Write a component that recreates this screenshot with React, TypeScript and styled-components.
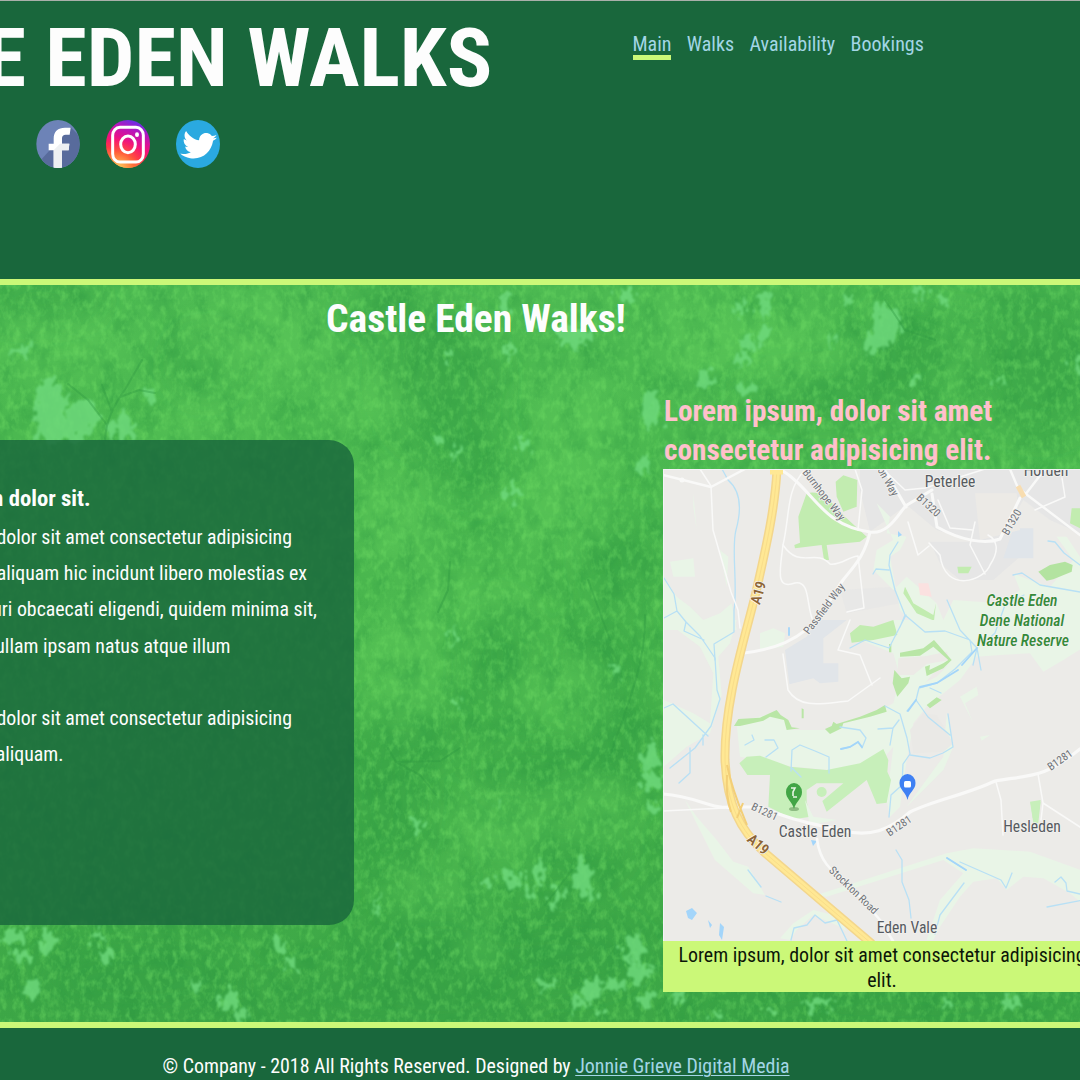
import React from 'react';
import styled, { createGlobalStyle } from 'styled-components';
import { FaTwitter } from 'react-icons/fa';

const color = {
  forest: '#19673c',
  lime: '#cbf878',
  sky: '#a3d6e6',
  pink: '#ffc0cb',
};

const GlobalStyle = createGlobalStyle`
  html, body { margin: 0; padding: 0; background: ${color.forest}; }
  *, *::before, *::after { box-sizing: border-box; }
  body { font-family: Roboto, "Liberation Sans", sans-serif; font-stretch: 75%; }
`;

const Page = styled.div`
  width: 1080px;
  height: 1080px;
  overflow: hidden;
  display: flex;
  flex-direction: column;
  color: #fdfdfd;
`;

const Header = styled.header`
  height: 285px;
  flex: none;
  display: flex;
  background: ${color.forest};
  border-top: 1px solid #a9b0aa;
  border-bottom: 6px solid ${color.lime};
`;

const Brand = styled.div`
  width: 632.5px;
  flex: none;
  padding-top: 16px;
`;

const SiteTitle = styled.h1`
  margin: 0;
  width: 492px;
  display: flex;
  justify-content: flex-end;
  white-space: nowrap;
  font-size: 82px;
  line-height: 82px;
  font-weight: 700;
`;

const TitleText = styled.span`
  transform: scaleX(1.031);
  transform-origin: right;
`;

const Socials = styled.div`
  display: flex;
  gap: 26px;
  padding: 21px 0 0 36px;
`;

const SocialIcon = styled.svg`
  display: block;
  width: 44px;
  height: 48px;
`;

const Nav = styled.nav`
  display: flex;
  align-items: flex-start;
  gap: 15.4px;
  padding-top: 32px;
`;

const NavLink = styled.a<{ $active?: boolean }>`
  color: ${color.sky};
  font-size: 20px;
  line-height: 22px;
  text-decoration: none;
  border-bottom: 5px solid ${(p) => (p.$active ? color.lime : 'transparent')};
`;

const Main = styled.main`
  position: relative;
  flex: none;
  height: 743px;
  background: #48b54d;
  border-bottom: 6px solid ${color.lime};
`;

const Foliage = styled.svg`
  position: absolute;
  inset: 0;
  width: 1080px;
  height: 737px;
`;

const Content = styled.div`
  position: relative;
`;

const PageHeading = styled.h2`
  margin: 0;
  width: 952px;
  padding-top: 11px;
  text-align: center;
  font-size: 39.5px;
  line-height: 46px;
  font-weight: 700;
`;

const Columns = styled.div`
  display: flex;
  align-items: flex-start;
  justify-content: space-between;
  width: 1101px;
  padding-top: 50px;
`;

const Panel = styled.section`
  width: 354px;
  height: 485px;
  margin-top: 48px;
  padding-top: 39px;
  background: rgba(25, 103, 60, 0.83);
  border-radius: 0 25px 25px 0;
`;

const PanelHeading = styled.h3`
  margin: 0 0 2px;
  width: 90.5px;
  display: flex;
  justify-content: flex-end;
  white-space: nowrap;
  font-size: 22.7px;
  line-height: 39px;
  font-weight: 700;
`;

const Paragraph = styled.p`
  margin: 0 0 36.4px;
`;

const Line = styled.span<{ $end: number }>`
  display: flex;
  justify-content: flex-end;
  width: ${(p) => p.$end}px;
  white-space: nowrap;
  font-size: 19.85px;
  line-height: 36.2px;
`;

const Aside = styled.aside`
  width: 438px;
  flex: none;
`;

const AsideHeading = styled.h3`
  margin: 0;
  padding-left: 1px;
  color: ${color.pink};
  font-size: 29.3px;
  line-height: 38.5px;
  font-weight: 700;
`;

const Figure = styled.figure`
  margin: 0;
  background: ${color.lime};
`;

const MapArt = styled.svg`
  display: block;
  width: 438px;
  height: 472px;
`;

const Caption = styled.figcaption`
  height: 51px;
  padding-top: 1.5px;
  color: #0c1608;
  text-align: center;
  font-size: 19.9px;
  line-height: 25.2px;
`;

const Footer = styled.footer`
  flex: none;
  width: 952px;
  padding-top: 27px;
  text-align: center;
  font-size: 19.9px;
  line-height: 24px;
`;

const CreditLink = styled.a`
  color: ${color.sky};
  text-decoration: underline;
  text-decoration-thickness: 1px;
  text-underline-offset: 2px;
`;

const MapText = styled.text`
  font-family: Roboto, "Liberation Sans", sans-serif;
  text-anchor: middle;
  stroke: #f3f2ef;
  stroke-width: 1.6px;
  stroke-linejoin: round;
  paint-order: stroke;
`;

function FacebookIcon() {
  return (
    <SocialIcon viewBox="0 0 132 144" preserveAspectRatio="none">
      <defs>
        <clipPath id="fb"><ellipse cx="66" cy="72" rx="65" ry="72" /></clipPath>
      </defs>
      <g clipPath="url(#fb)">
        <rect width="132" height="144" fill="#6d83b7" />
        <path d="M104 22 132 50V144H28L18 116Z" fill="#586b9c" />
        <path d="M53 144V91H38V71H53V56C53 34 66 23 87 23H104L101 44H89C82 44 78 48 78 55V71H100L98 91H78V144Z" fill="#fff" />
        <path d="M53 91 72 71H100L98 91H78V144H53Z" fill="#eef0f2" />
      </g>
    </SocialIcon>
  );
}

function InstagramIcon() {
  return (
    <SocialIcon viewBox="0 0 132 144" preserveAspectRatio="none">
      <defs>
        <linearGradient id="igBase" x1="0.7" y1="0" x2="0.35" y2="1">
          <stop offset="0" stopColor="#5b35ee" />
          <stop offset="0.22" stopColor="#b516bd" />
          <stop offset="0.5" stopColor="#f2117e" />
          <stop offset="0.72" stopColor="#ff2a48" />
          <stop offset="0.9" stopColor="#ff9443" />
          <stop offset="1" stopColor="#ffd067" />
        </linearGradient>
        <radialGradient id="igWarm" cx="0.3" cy="1" r="0.65">
          <stop offset="0" stopColor="#ffc95c" />
          <stop offset="0.5" stopColor="#ff6b36" stopOpacity="0.8" />
          <stop offset="1" stopColor="#ff3150" stopOpacity="0" />
        </radialGradient>
      </defs>
      <ellipse cx="66" cy="72" rx="66" ry="72" fill="url(#igBase)" />
      <ellipse cx="66" cy="72" rx="66" ry="72" fill="url(#igWarm)" />
      <g fill="none" stroke="#fff">
        <rect x="20" y="22" width="92" height="104" rx="22" ry="24" strokeWidth="9" />
        <ellipse cx="66" cy="73" rx="22" ry="25" strokeWidth="9" />
      </g>
      <ellipse cx="93" cy="44" rx="6" ry="7" fill="#fff" />
    </SocialIcon>
  );
}

function TwitterIcon() {
  return (
    <SocialIcon viewBox="0 0 44 48" preserveAspectRatio="none">
      <ellipse cx="22" cy="24" rx="22" ry="24" fill="#2aa9e0" />
      <g transform="rotate(9 22 26)">
        <FaTwitter x={5.5} y={8.5} size={34} color="#fff" />
      </g>
    </SocialIcon>
  );
}

type Blob = [number, number, number, number];

const clearings: Blob[] = [
  [50, 412, 15, 34], [82, 418, 16, 18], [122, 428, 12, 14], [150, 397, 5, 8], [66, 428, 18, 14], [20, 350, 12, 4],
  [470, 312, 3, 10], [505, 304, 5, 13], [448, 360, 4, 6], [573, 335, 20, 12], [626, 296, 9, 8], [510, 352, 3, 9],
  [652, 410, 9, 20], [643, 465, 6, 10], [525, 445, 7, 6], [455, 455, 3, 10], [512, 490, 6, 11], [440, 440, 4, 4],
  [740, 308, 5, 8], [764, 306, 6, 13], [745, 342, 8, 9], [763, 336, 4, 8], [742, 360, 6, 7], [705, 378, 7, 8],
  [748, 388, 10, 7], [849, 299, 4, 5], [886, 325, 13, 22], [872, 344, 7, 11], [918, 292, 6, 8], [942, 299, 4, 6],
  [917, 380, 7, 5], [831, 341, 3, 5], [1077, 362, 5, 8], [1000, 382, 3, 5],
  [452, 637, 3, 9], [616, 669, 4, 8], [459, 703, 3, 5], [650, 758, 8, 14], [652, 782, 12, 9], [654, 808, 7, 7],
  [418, 826, 6, 6], [501, 803, 3, 6], [513, 880, 9, 9], [538, 874, 7, 12], [488, 882, 7, 4], [582, 876, 8, 18],
  [557, 897, 5, 12], [592, 895, 4, 8], [530, 892, 4, 8], [379, 904, 2, 9], [400, 954, 3, 8], [547, 984, 9, 4],
  [633, 948, 8, 14], [640, 972, 12, 10], [592, 990, 10, 12], [613, 985, 9, 7], [580, 1005, 7, 5], [645, 1000, 8, 7],
  [12, 936, 12, 7], [48, 942, 8, 11], [22, 958, 10, 6], [100, 938, 6, 6], [108, 955, 7, 7], [230, 1000, 9, 11],
  [242, 1014, 7, 7], [280, 946, 7, 6], [290, 965, 4, 4], [195, 985, 5, 6], [30, 990, 8, 7], [605, 1012, 6, 4],
  [820, 1004, 17, 6], [715, 1013, 6, 5], [680, 998, 6, 4], [1010, 1003, 9, 5], [770, 1010, 5, 4], [945, 1006, 6, 4],
];

const shades: Blob[] = [
  [440, 380, 55, 70], [470, 460, 36, 40], [40, 300, 60, 20], [390, 305, 40, 25], [920, 350, 60, 45], [1040, 360, 60, 75],
  [420, 730, 35, 30], [600, 655, 40, 30], [620, 740, 30, 70], [540, 770, 60, 25], [385, 790, 35, 90], [560, 850, 65, 25],
  [440, 970, 90, 70], [560, 950, 80, 35], [380, 1000, 110, 30], [140, 980, 100, 40], [620, 560, 30, 50], [900, 1010, 220, 18],
  [205, 365, 30, 30], [500, 660, 30, 60], [830, 395, 90, 20],
];

const lights: Blob[] = [
  [60, 345, 70, 30], [260, 340, 70, 45], [370, 400, 50, 30], [400, 520, 45, 50], [560, 500, 60, 50], [580, 420, 50, 40],
  [400, 670, 50, 60], [560, 690, 50, 35], [500, 830, 55, 40], [600, 810, 50, 30], [430, 890, 40, 25], [700, 330, 40, 50],
  [780, 350, 60, 35], [200, 420, 60, 20], [480, 600, 70, 25], [960, 355, 20, 35], [480, 940, 15, 35],
];

const blobs = (list: Blob[]) =>
  list.map(([x, y, rx, ry], i) => <ellipse key={i} cx={x} cy={y} rx={rx} ry={ry} />);

function FoliageBackdrop() {
  return (
    <Foliage viewBox="0 285 1080 737" aria-hidden="true">
      <defs>
        <linearGradient id="depth" x1="0" y1="0" x2="0" y2="1">
          <stop offset="0" stopColor="#4dba52" />
          <stop offset="0.5" stopColor="#48b54d" />
          <stop offset="1" stopColor="#3ca646" />
        </linearGradient>
        <filter id="leaves" x="0" y="0" width="100%" height="100%" colorInterpolationFilters="sRGB">
          <feTurbulence type="fractalNoise" baseFrequency="0.15 0.1" numOctaves="3" seed="8" />
          <feColorMatrix values="0 0 0 0 0.45  0 0 0 0 0.88  0 0 0 0 0.4  2.6 0 0 0 -1.15" />
          <feGaussianBlur stdDeviation="0.5" />
        </filter>
        <filter id="gaps" x="0" y="0" width="100%" height="100%" colorInterpolationFilters="sRGB">
          <feTurbulence type="fractalNoise" baseFrequency="0.05 0.035" numOctaves="5" seed="31" />
          <feColorMatrix values="0 0 0 0 0.16  0 0 0 0 0.58  0 0 0 0 0.25  0 2.2 0 0 -0.95" />
        </filter>
        <filter id="ragged" x="-5%" y="-5%" width="110%" height="110%" colorInterpolationFilters="sRGB">
          <feTurbulence type="fractalNoise" baseFrequency="0.14 0.09" numOctaves="2" seed="4" result="n" />
          <feDisplacementMap in="SourceGraphic" in2="n" scale="27" xChannelSelector="R" yChannelSelector="G" />
          <feGaussianBlur stdDeviation="0.9" />
        </filter>
        <filter id="soft" x="-10%" y="-10%" width="120%" height="120%">
          <feGaussianBlur stdDeviation="16" />
        </filter>
      </defs>
      <rect y="285" width="1080" height="737" fill="url(#depth)" />
      <g fill="#36a044" opacity="0.6" filter="url(#soft)">{blobs(shades)}</g>
      <g fill="#62cd5b" opacity="0.45" filter="url(#soft)">{blobs(lights)}</g>
      <rect y="285" width="1080" height="737" filter="url(#gaps)" opacity="0.4" />
      <rect y="285" width="1080" height="737" filter="url(#leaves)" opacity="0.42" />
      <g fill="#6fda7d" opacity="0.82" filter="url(#ragged)">{blobs(clearings)}</g>
      <g fill="none" stroke="#2f9841" strokeWidth="2" opacity="0.38" strokeLinecap="round">
        <path d="M105 440C106 420 114 405 126 388L142 360M107 425 88 400 68 384M112 412 102 385M120 397 139 390 155 393" />
        <path d="M388 748 396 762 440 761 460 748M398 763 420 775 436 795" />
        <path d="M645 615C646 660 630 700 610 755M450 562 448 590 438 612M588 580 610 640M572 870 545 905" />
        <path d="M885 300 905 330 935 340" />
      </g>
    </Foliage>
  );
}

/* The groups scaled by a third use a grid three times finer than the map's own. */
function AreaMap() {
  return (
    <MapArt viewBox="663 469 438 472">
      <rect x="663" y="469" width="438" height="472" fill="#ecebe8" />

      <g transform="translate(660 390) scale(.33333)" strokeLinejoin="round">
        <g fill="#e6e6e6">
          <path d="M600 236H1260V430L1170 390 1090 330 1020 450 960 458 830 420 740 345 630 425 600 300Z" />
          <path d="M810 455 960 455 1050 420 1080 500 1000 570 900 570 840 520Z" />
          <path d="M540 600 700 590 720 640 560 670Z" opacity=".6" />
        </g>
        <path d="M1060 415H1120V505H1030Z" fill="#e0e5ea" />
        <path d="M945 310H1070L1080 420 960 450Z" fill="#eceae6" />
        <g fill="#e9f5e7">
          <path d="M650 340 690 380 680 430 740 440 720 480 690 500 720 660 780 720H1260V500L1220 440 1190 440 1240 510 1170 590 1110 570 1060 550 1080 600 1020 640 880 630 850 690 830 640 740 560 700 600 640 540 650 480 700 450Z" />
          <path d="M100 310 110 420 100 350ZM30 515 100 505 105 560 40 560ZM180 480 205 500 200 590Z" />
          <path d="M12 560 50 620 90 650 130 690 180 670 215 640 230 720H12Z" />
        </g>
        <g fill="#c2ecb0">
          <path d="M440 310C480 300 500 320 560 385L620 440 600 455 500 465 507 510H492L485 465 405 475 403 465 420 458 415 380Z" />
          <path d="M527 275 550 256 592 270 590 350 550 365 530 320Z" />
          <path d="M1135 545 1170 525 1215 515 1238 525 1235 545 1180 568 1160 572Z" fill="#b3e3a0" />
          <path d="M1235 355H1330V450L1230 400ZM892 530 935 530 925 550 895 550Z" />
          <path d="M735 590 760 640 820 675 828 640 822 692 770 670 730 610Z" />
        </g>
        <path d="M775 580 805 580 815 620 780 615Z" fill="#fbe1e0" />
      </g>

      <g transform="translate(660 620) scale(.33333)" strokeLinejoin="round">
        <g fill="#e9f5e7">
          <path d="M12 0H230L210 70 175 110 185 225 150 340 80 380 12 440V240L100 280 150 310 160 160 120 80Z" />
          <path d="M230 310 350 275 400 330 500 330 640 280 700 250 770 200 830 170 900 100 970 0H1290V70L1210 120 1150 155 1110 100 1020 105 950 110 900 180 800 260 760 310 750 370 740 420 720 560 690 590 680 540 700 380 640 450 510 450 400 440 240 410Z" />
          <path d="M700 0H1000L930 100 820 160 770 220 700 250 720 170 700 100 600 60Z" />
          <path d="M860 280 880 380 850 450 740 560 850 410Z" />
          <path d="M900 230 950 200 955 225 915 250 940 310ZM960 350 990 345 965 362Z" />
          <path d="M300 40 340 25 375 40 370 80 300 90Z" />
        </g>
        <path d="M375 90 440 50 470 0H560L490 55V130H535V185L480 190 460 175 388 193Z" fill="#e1e5e9" />
        <path d="M750 330 790 280 830 285 880 370 850 395 760 400Z" fill="#eae9e6" />
        <path d="M715 115 800 108 860 95 870 120 800 132 760 165 712 165Z" fill="#eceae6" />
        <g fill="#b9e6a6">
          <path d="M570 40 600 15 640 20 700 0 712 45 640 60 575 68Z" fill="#c2ecb0" />
          <path d="M720 98 790 85 822 60 875 120 850 145 800 168 795 140 810 135 808 150 850 130 865 120 820 80 780 107 720 110Z" />
          <path d="M703 150 725 175 750 170 745 190 712 230 698 190ZM800 255 830 232 845 240 810 265Z" />
          <path d="M222 318 235 297 300 293 350 270 362 285 385 300 395 322 420 325 380 330 372 300 330 290 310 302 240 318ZM495 327 515 318 520 305 530 312 600 290 650 270 675 255 680 275 630 290 550 310 545 325 510 342ZM425 265 431 268V295H425ZM687 72H694V97H687Z" />
        </g>
        <g fill="#c7efba">
          <path d="M238 430 260 410 300 407 390 440 500 450 600 430 670 387 685 420 682 455 693 480 680 548 650 552 620 480 500 575 487 543 550 490 470 490 440 510 440 545 452 590 400 598 325 560 330 465 262 465Z" />
          <circle cx="485" cy="516" r="15" />
          <path d="M1112 548 1142 545 1135 610H1120Z" />
        </g>
      </g>

      <g transform="translate(660 800) scale(.33333)" fill="#e9f5e7">
        <path d="M75 0 110 50 170 120 220 185 265 200 315 285 280 280 165 180ZM470 285 860 160 940 145 1110 155 1290 220V330L1230 280 1150 235 1090 230 1040 270 1010 235 940 245 900 290 840 380 820 420H800L840 300 910 220 850 180 500 290ZM390 420 360 415 400 370 460 330 540 350 560 395 540 380 460 345 410 390Z" />
        <path d="M435 0 460 50 530 60 450 75Z" />
        <path d="M1110 5 1142 0 1133 60 1118 55Z" fill="#c7efba" />
      </g>

      <g fill="none" stroke="#b8e0f5" strokeWidth="1.3" strokeLinecap="round" strokeLinejoin="round">
        <path d="M722 469 728 480C742 492 741 512 736 530S738 585 734 610V632L714 644 715 660" />
        <path d="M664 578 674 594 677 611 664 618M677 611 686 622 684 631 704 640M686 622 700 636 715 658 717 690 720 699 711 726 695 748 670 768M664 708 673 704 708 736M690 748V773L679 783M703 735 703 745" />
        <path d="M898 542 890 555 889 565 895 590 905 615 900 627M889 570 876 569 873 574M905 615 925 632 945 631 970 640 972 652M947 600 960 630 977 648 973 665M906 615 889 648 865 640 850 648M972 652 955 669 937 683 919 688 916 700 907 711M977 648 981 670M982 645 995 633 1005 605 1024 595" />
        <path d="M885 706 900 714 907 738 910 754 903 764 902 785 891 795 889 817M910 755 930 758 943 753 953 747 948 714M916 700 928 717 950 735M930 688 941 693" />
        <path d="M840 727 860 730 866 738 862 748M878 729 893 728 899 720M893 728 890 745M791 771 792 750 800 745 815 751 829 757V773M841 749 850 747 858 742 862 748M765 740 774 740 778 748 766 757M752 735 754 740 745 745M792 768 801 777" />
        <path d="M896 850 902 860V882L909 900 911 918M947 858 966 870M960 862 1001 880 1006 888 1012 873M964 883 940 915 935 934M1055 882 1061 877 1066 883 1067 891 1080 894M1047 907 1083 900M791 940 794 928 807 925 815 915 825 923 837 920 847 941M748 870 761 887M766 896 781 902M1048 541 1055 542 1064 553 1080 565M1013 575 1022 573 1040 585 1080 592" />
      </g>
      <g fill="none" stroke="#a3d5fa" strokeWidth="1.8" strokeLinecap="round">
        <path d="M977 648 962 665M958 670 937 683 920 687M916 700 908 711M841 749 850 747 858 742 862 747M789 628V635M947 858 966 870" />
      </g>
      <g fill="#a3d5fa">
        <path d="M686 911 692 908 697 913 692 920 688 918ZM708 920 712 925 710 928ZM720 923 724 927 722 940 719 935ZM811 840 817 841 813 846ZM898 531 902 535 898 537Z" />
      </g>

      <g fill="none" stroke="#f9f9f8" strokeLinecap="round" strokeLinejoin="round">
        <g strokeWidth="1.5">
          <path d="M700 469 711 486 713 530 731 592 738 610 740 628M804 471C786 490 790 515 783 545M783 545C780 570 775 590 795 583C812 580 805 610 815 625" />
          <path d="M783 545C800 570 815 548 830 564 840 566 850 556 858 556L864 608 847 612M908 522 918 555 929 546M929 543 940 555C945 595 985 580 990 565 1000 550 997 540 988 535M975 522 970 545 985 574M938 500 950 528 973 530M855 469 862 490 858 530M885 471 905 490 925 488 985 469M1035 510 1065 497 1062 478M783 654 788 690C800 710 825 703 848 701L880 678M850 620 838 650 860 655 872 685" />
          <path d="M996 782 1001 800 1003 835M1038 774 1043 803 1041 820M1043 803 1100 840M663 811 724 808" />
        </g>
        <path d="M663 475 711 487 745 469M1010 469 1018 488 1080 535M1025 495 1045 469" strokeWidth="2.4" />
        <circle cx="682" cy="480" r="1.5" strokeWidth="2" />
        <path d="M780 469C815 490 820 525 870 532C890 535 900 510 907 505L932 490M870 532C865 555 855 565 843 580 825 605 815 645 744 653" strokeWidth="3" />
        <path d="M884 469 906 507M932 494 937 527C960 540 985 545 1000 539L1020 498" strokeWidth="3" />
        <path d="M663 794C700 797 710 810 735 807H760C790 820 815 824 840 830C870 838 890 830 910 812 935 800 965 795 995 781 1030 775 1045 778 1080 749" strokeWidth="3.2" />
        <path d="M817 839C820 865 835 873 850 885L880 920 893 941" strokeWidth="2.6" />
      </g>

      <g fill="none" strokeLinecap="butt">
        <path d="M777 469C775 510 765 552 756 592C746 635 724 700 725 760C727 805 740 830 765 853L872 944" stroke="#f3d68c" strokeWidth="9" />
        <path d="M777 469C775 510 765 552 756 592C746 635 724 700 725 760C727 805 740 830 765 853L872 944" stroke="#ffe894" strokeWidth="6" />
        <path d="M777 469C775 510 765 552 756 592C746 635 724 700 725 760C727 805 740 830 765 853L872 944" stroke="#f9dd8a" strokeWidth="1" />
        <path d="M727 765C732 790 740 808 747 825M727 775C726 790 727 800 731 812M743 803 737 818" stroke="#f3cf78" strokeWidth="2" />
        <path d="M770 471H783" stroke="#ffe894" strokeWidth="7" />
      </g>
      <path d="M1018 486 1024 497" stroke="#f8ddb0" strokeWidth="5" />

      <g fontSize="15.6" fontWeight="400">
        <g fill="#565a60">
          <MapText x="950" y="487">Peterlee</MapText>
          <MapText x="1046" y="475.500">Horden</MapText>
          <MapText x="815" y="836.500">Castle Eden</MapText>
          <MapText x="1032" y="831.500">Hesleden</MapText>
          <MapText x="907" y="932.500">Eden Vale</MapText>
        </g>
        <g fill="#358a39" fontStyle="italic" fontSize="15.6" fontWeight="500">
          <MapText x="1022" y="606">Castle Eden</MapText>
          <MapText x="1022" y="626">Dene National</MapText>
          <MapText x="1023" y="645.500">Nature Reserve</MapText>
        </g>
        <g fill="#70747a" fontSize="11">
          <MapText transform="translate(821 497) rotate(52)">Burnhope Way</MapText>
          <MapText transform="translate(884 482) rotate(61)">ton Way</MapText>
          <MapText transform="translate(827 611) rotate(-53)">Passfield Way</MapText>
          <MapText transform="translate(926 508) rotate(43)">B1320</MapText>
          <MapText transform="translate(1015 524) rotate(-60)">B1320</MapText>
          <MapText transform="translate(763 815) rotate(25)">B1281</MapText>
          <MapText transform="translate(901 829) rotate(-34)">B1281</MapText>
          <MapText transform="translate(1062 763) rotate(-35)">B1281</MapText>
          <MapText transform="translate(851 893) rotate(44)">Stockton Road</MapText>
        </g>
        <g fill="#8d6535" fontSize="14.5" fontWeight="600">
          <MapText transform="translate(763 594) rotate(-74)">A19</MapText>
          <MapText transform="translate(755 848) rotate(41)">A19</MapText>
        </g>
      </g>

      <ellipse cx="794" cy="809" rx="5" ry="2" fill="#8dbb82" />
      <path d="M794 809C792 801 786 799 786 792A8 9 0 0 1 802 792C802 799 796 801 794 809Z" fill="#42a546" />
      <path d="M791 788H795L793 792 793 796M793 797H797" stroke="#e8f5e5" strokeWidth="1.6" fill="none" />
      <path d="M907.500 800C906 792 899.500 790 899.500 783A8 9 0 0 1 915.500 783C915.500 790 909 792 907.500 800Z" fill="#3f80f3" />
      <rect x="904" y="781" width="7" height="6.500" rx="1.500" fill="#fff" />
      <path d="M663.500 941V469.500H1101" fill="none" stroke="#f5f2f7" />
    </MapArt>
  );
}

export default function App() {
  return (
    <Page>
      <GlobalStyle />
      <Header>
        <Brand>
          <SiteTitle><TitleText>CASTLE EDEN WALKS</TitleText></SiteTitle>
          <Socials>
            <FacebookIcon />
            <InstagramIcon />
            <TwitterIcon />
          </Socials>
        </Brand>
        <Nav>
          <NavLink $active>Main</NavLink>
          <NavLink>Walks</NavLink>
          <NavLink>Availability</NavLink>
          <NavLink>Bookings</NavLink>
        </Nav>
      </Header>

      <Main>
        <FoliageBackdrop />
        <Content>
          <PageHeading>Castle Eden Walks!</PageHeading>
          <Columns>
            <Panel>
              <PanelHeading>Lorem ipsum dolor sit.</PanelHeading>
              <Paragraph>
                <Line $end={292}>Lorem ipsum, dolor sit amet consectetur adipisicing</Line>
                <Line $end={307}>elit. Nostrum aliquam hic incidunt libero molestias ex</Line>
                <Line $end={317}>Excepturi obcaecati eligendi, quidem minima sit,</Line>
                <Line $end={230.5}>nullam ipsam natus atque illum</Line>
              </Paragraph>
              <Paragraph>
                <Line $end={292}>Lorem ipsum, dolor sit amet consectetur adipisicing</Line>
                <Line $end={63.5}>elit. Nostrum aliquam.</Line>
              </Paragraph>
            </Panel>
            <Aside>
              <AsideHeading>
                Lorem ipsum, dolor sit amet<br />consectetur adipisicing elit.
              </AsideHeading>
              <Figure>
                <AreaMap />
                <Caption>
                  Lorem ipsum, dolor sit amet consectetur adipisicing<br />elit.
                </Caption>
              </Figure>
            </Aside>
          </Columns>
        </Content>
      </Main>

      <Footer>
        © Company - 2018 All Rights Reserved. Designed by <CreditLink>Jonnie Grieve Digital Media</CreditLink>
      </Footer>
    </Page>
  );
}
